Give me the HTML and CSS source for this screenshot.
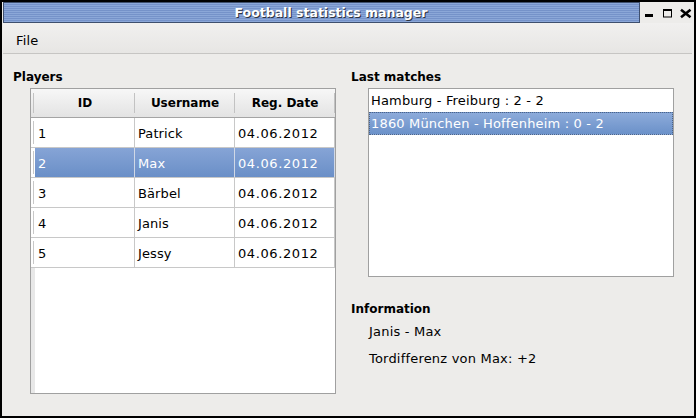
FILE: index.html
```html
<!DOCTYPE html>
<html lang="en">
<head>
<meta charset="utf-8">
<title>Football statistics manager</title>
<link rel="stylesheet" href="styles.css">
</head>
<body>
<div class="window">
  <div class="titlebar">
    <div class="title-bar"><span class="title-text">Football statistics manager</span></div>
    <svg class="wbtns" width="54" height="21" viewBox="0 0 54 21" aria-hidden="true">
      <rect x="5" y="12" width="8" height="3" fill="#000"/>
      <rect x="23" y="7" width="9" height="2" fill="#000"/>
      <rect x="23.5" y="7.5" width="8" height="7.5" fill="none" stroke="#000" stroke-width="1"/>
      <path d="M41 7.8 L50.5 15.2 M50.5 7.8 L41 15.2" stroke="#000" stroke-width="2.6" fill="none"/>
    </svg>
  </div>
  <div class="menubar"><span class="menu-item">File</span></div>
  <div class="content">
    <section class="col col-left">
      <h2 class="group-label">Players</h2>
      <div class="table">
        <div class="thead">
          <div class="corner"></div>
          <div class="th">ID</div>
          <div class="th">Username</div>
          <div class="th">Reg. Date</div>
        </div>
        <div class="tr"><div class="vh"></div><div class="td">1</div><div class="td">Patrick</div><div class="td date">04.06.2012</div></div>
        <div class="tr sel"><div class="vh"></div><div class="td">2</div><div class="td">Max</div><div class="td date">04.06.2012</div></div>
        <div class="tr"><div class="vh"></div><div class="td">3</div><div class="td">Bärbel</div><div class="td date">04.06.2012</div></div>
        <div class="tr"><div class="vh"></div><div class="td">4</div><div class="td">Janis</div><div class="td date">04.06.2012</div></div>
        <div class="tr"><div class="vh"></div><div class="td">5</div><div class="td">Jessy</div><div class="td date">04.06.2012</div></div>
        <div class="filler"></div>
      </div>
    </section>
    <section class="col col-right">
      <h2 class="group-label">Last matches</h2>
      <ul class="list">
        <li class="item">Hamburg - Freiburg : 2 - 2</li>
        <li class="item sel">1860 München - Hoffenheim : 0 - 2</li>
      </ul>
      <h2 class="group-label info-label">Information</h2>
      <p class="info">Janis - Max</p>
      <p class="info info-2">Tordifferenz von Max: +2</p>
    </section>
  </div>
</div>
</body>
</html>
```
FILE: styles.css
```css
* { box-sizing: border-box; margin: 0; padding: 0; }
html, body { width: 696px; height: 418px; overflow: hidden; }
body {
  background: #000;
  font-family: "DejaVu Sans", sans-serif;
  font-size: 13px;
  color: #000;
}
.window {
  width: 696px;
  height: 418px;
  border: 2px solid #000;
  background: #edecea;
  display: flex;
  flex-direction: column;
}
.titlebar {
  height: 21px;
  display: flex;
  background: #edecea;
}
.title-bar {
  margin-left: 1px;
  width: 637px;
  height: 21px;
  border: 1px solid #3e4f6e;
  background: repeating-linear-gradient(to bottom, #8ba7d8 0, #8ba7d8 1px, #7592c9 1px, #7592c9 2px);
  text-align: center;
  padding-left: 19px;
  padding-top: 1px;
}
.title-text {
  font-family: "DejaVu Sans", sans-serif;
  font-weight: bold;
  font-size: 12.5px;
  line-height: 18px;
  color: #fff;
  text-shadow: 1px 1px 0 #2e3440;
  white-space: nowrap;
}
.wbtns { display: block; flex: none; }
.menubar {
  height: 31px;
  margin: 0 2px 0 1px;
  border-bottom: 1px solid #c6c5c3;
  background: linear-gradient(to bottom, #f1f0ef, #e7e6e4);
  padding: 10px 0 0 13px;
  line-height: 15px;
}
.menu-item { font-size: 13px; letter-spacing: 0.15px; }
.content {
  flex: 1;
  display: flex;
  padding: 16px 0 0 11px;
}
.col { display: flex; flex-direction: column; }
.col-left { width: 323px; }
.col-right { margin-left: 15px; width: 323px; }
.group-label {
  font-size: 12px;
  font-weight: bold;
  line-height: 14px;
  height: 14px;
}
.table {
  margin: 4px 0 0 17px;
  width: 306px;
  height: 306px;
  border: 1px solid #a0a0a0;
  background: #fff;
  display: flex;
  flex-direction: column;
}
.thead {
  display: grid;
  grid-template-columns: 4px 100px 100px 100px;
  height: 29px;
  border-bottom: 1px solid #a4a4a4;
  background: linear-gradient(to bottom, #f7f7f7, #e3e3e3);
}
.corner, .th { position: relative; }
.corner::after, .th::after {
  content: "";
  position: absolute;
  right: 0;
  top: 4px;
  bottom: 4px;
  width: 1px;
  background: #c2c2c2;
}
.corner::after { right: 1px; }
.th {
  font-size: 12px;
  font-weight: bold;
  text-align: center;
  padding-top: 1px;
  line-height: 27px;
}
.tr {
  display: grid;
  grid-template-columns: 4px 100px 100px 100px;
  height: 30px;
  border-bottom: 1px solid #c8c8c8;
}
.vh { position: relative; background: #fff; }
.vh::after {
  content: "";
  position: absolute;
  right: 1px;
  top: 3px;
  bottom: 3px;
  width: 1px;
  background: #c8c8c8;
}
.td {
  border-right: 1px solid #c8c8c8;
  padding: 2px 0 0 3px;
  line-height: 27px;
  white-space: nowrap;
  letter-spacing: 0.1px;
}
.td.date { letter-spacing: 0.6px; }
.tr.sel .td {
  background: linear-gradient(to bottom, #86a4d6, #6a8fc7);
  color: #fff;
  border-right-color: #d0d8e6;
}
.filler {
  flex: 1;
  background: linear-gradient(to right, #e8e8e8 4px, #fff 4px);
}
.list {
  list-style: none;
  margin: 4px 0 0 17px;
  width: 306px;
  height: 189px;
  border: 1px solid #a0a0a0;
  background: #fff;
}
.item {
  height: 23px;
  line-height: 23px;
  padding-left: 2px;
  white-space: nowrap;
  letter-spacing: 0.17px;
}
.item.sel {
  background: linear-gradient(to bottom, #8dabda, #6b91c9);
  color: #fff;
  border: 1px dotted #4d6488;
  line-height: 21px;
  padding-left: 1px;
}
.info-label { margin-top: 25px; }
.info {
  margin: 8px 0 0 18px;
  line-height: 15px;
  font-size: 13px;
  letter-spacing: 0.2px;
}
.info-2 { margin-top: 12px; }
```
